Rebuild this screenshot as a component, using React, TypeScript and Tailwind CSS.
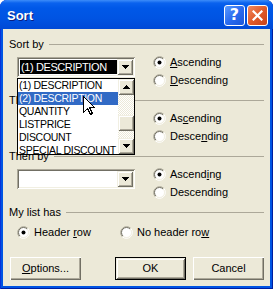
import React from "react";

const font = "font-['Liberation_Sans',Arial,sans-serif]";

function Radio({ checked }: { checked?: boolean }) {
  return (
    <svg width="13" height="13" viewBox="0 0 13 13" className="shrink-0">
      <circle cx="6.5" cy="6.5" r="5" fill="#fff" />
      <path d="M2.26 10.74 A6 6 0 0 1 10.74 2.26" stroke="#ACA899" strokeWidth="1" fill="none" />
      <path d="M10.74 2.26 A6 6 0 0 1 2.26 10.74" stroke="#fff" strokeWidth="1" fill="none" />
      <path d="M2.96 10.04 A5 5 0 0 1 10.04 2.96" stroke="#716F64" strokeWidth="1" fill="none" />
      <path d="M10.04 2.96 A5 5 0 0 1 2.96 10.04" stroke="#F1EFE2" strokeWidth="1" fill="none" />
      {checked && <circle cx="6.5" cy="6.5" r="2" fill="#000" />}
    </svg>
  );
}

function RadioRow({ checked, children }: { checked?: boolean; children: React.ReactNode }) {
  return (
    <div className="h-[18px] flex items-center gap-[4px]">
      <Radio checked={checked} />
      <span className="leading-[13px]">{children}</span>
    </div>
  );
}

function DownArrow() {
  return (
    <svg width="7" height="4" viewBox="0 0 7 4" shapeRendering="crispEdges">
      <rect x="0" y="0" width="7" height="1" fill="#000" />
      <rect x="1" y="1" width="5" height="1" fill="#000" />
      <rect x="2" y="2" width="3" height="1" fill="#000" />
      <rect x="3" y="3" width="1" height="1" fill="#000" />
    </svg>
  );
}

function UpArrow() {
  return (
    <svg width="7" height="4" viewBox="0 0 7 4" shapeRendering="crispEdges">
      <rect x="3" y="0" width="1" height="1" fill="#000" />
      <rect x="2" y="1" width="3" height="1" fill="#000" />
      <rect x="1" y="2" width="5" height="1" fill="#000" />
      <rect x="0" y="3" width="7" height="1" fill="#000" />
    </svg>
  );
}

const raised =
  "bg-[#ECE9D8] shadow-[inset_1px_1px_0_#F1EFE2,inset_-1px_-1px_0_#716F64,inset_2px_2px_0_#fff,inset_-2px_-2px_0_#ACA899]";

function Combo({ value }: { value?: string }) {
  return (
    <div className="w-[118px] h-[20px] bg-white p-[2px] flex shadow-[inset_1px_1px_0_#ACA899,inset_-1px_-1px_0_#fff,inset_2px_2px_0_#716F64,inset_-2px_-2px_0_#F1EFE2]">
      <div className="flex-1 flex items-center pl-[1px]">
        {value && (
          <span className="bg-black text-white h-[14px] leading-[14px] w-full pl-[1px] pr-[1px] tracking-[-0.4px] whitespace-nowrap overflow-hidden">
            {value}
          </span>
        )}
      </div>
      <div className={`w-[16px] h-[16px] flex items-center justify-center ${raised}`}>
        <DownArrow />
      </div>
    </div>
  );
}

function GroupHeader({ label }: { label: string }) {
  return (
    <div className="h-[14px] flex items-center pl-[6px] pr-[6px]">
      <span className="leading-[13px]">{label}</span>
      <div className="flex-1 h-px bg-[#ACA899] ml-[5px]" />
    </div>
  );
}

function SortGroup({
  label,
  value,
  asc,
  desc,
}: {
  label: string;
  value?: string;
  asc: React.ReactNode;
  desc: React.ReactNode;
}) {
  return (
    <div>
      <GroupHeader label={label} />
      <div className="h-[42px] flex">
        <div className="ml-[14px] mt-[6px]">
          <Combo value={value} />
        </div>
        <div className="ml-[18px] mt-[2px] flex flex-col">
          <RadioRow checked>{asc}</RadioRow>
          <RadioRow>{desc}</RadioRow>
        </div>
      </div>
    </div>
  );
}

function PushButton({ children, isDefault }: { children: React.ReactNode; isDefault?: boolean }) {
  if (isDefault) {
    return (
      <div className="w-[71px] h-[23px] border border-black flex">
        <div className={`flex-1 flex items-center justify-center ${raised}`}>{children}</div>
      </div>
    );
  }
  return (
    <div className="w-[71px] h-[23px] flex items-center justify-center bg-[#ECE9D8] shadow-[inset_1px_1px_0_#fff,inset_-1px_-1px_0_#716F64,inset_-2px_-2px_0_#ACA899]">
      {children}
    </div>
  );
}

const items = ["(1) DESCRIPTION", "(2) DESCRIPTION", "QUANTITY", "LISTPRICE", "DISCOUNT", "SPECIAL DISCOUNT"];

export default function App() {
  return (
    <div className={`${font} text-[11px] text-black bg-white w-[273px] h-[289px]`}>
      <div className="w-[273px] h-[289px] rounded-t-[7px] overflow-hidden bg-[#0054E3] flex flex-col px-[3px] pb-[3px] shadow-[inset_1px_0_0_#0831D9,inset_-1px_0_0_#001EA0,inset_0_-1px_0_#001EA0]">
        {/* Title bar */}
        <div className="-mx-[3px] h-[29px] shrink-0 flex items-center bg-[linear-gradient(to_bottom,#3D8DF9_0px,#0A62EE_3px,#0058E8_8px,#0054E3_18px,#0049D6_29px)]">
          <span className="ml-[7px] pt-[2px] text-white font-bold text-[13px] [text-shadow:1px_1px_0_#0A1E80]">
            Sort
          </span>
          <div className="ml-auto mr-[5px] flex gap-[2px] pt-[1px]">
            <div className="w-[21px] h-[21px] rounded-[3px] border border-white bg-[linear-gradient(135deg,#5A9BFF_0%,#2A6CF0_50%,#1A56D8_100%)] flex items-center justify-center">
              <span className="text-white font-bold text-[16px] leading-none font-['DejaVu_Sans',sans-serif]">?</span>
            </div>
            <div className="w-[21px] h-[21px] rounded-[3px] border border-white bg-[linear-gradient(135deg,#F08A60_0%,#E05A2A_50%,#C8411A_100%)] flex items-center justify-center">
              <svg width="11" height="11" viewBox="0 0 11 11">
                <path d="M1.5 1.5 L9.5 9.5 M9.5 1.5 L1.5 9.5" stroke="#fff" strokeWidth="2.2" strokeLinecap="square" />
              </svg>
            </div>
          </div>
        </div>

        {/* Body */}
        <div className="relative flex-1 bg-[#ECE9D8] pt-[8px]">
          <SortGroup
            label="Sort by"
            value="(1) DESCRIPTION"
            asc={<><u>A</u>scending</>}
            desc={<><u>D</u>escending</>}
          />
          <SortGroup
            label="Then by"
            asc={<>As<u>c</u>ending</>}
            desc={<>Desce<u>n</u>ding</>}
          />
          <SortGroup
            label="Then by"
            asc={<>Ascend<u>i</u>ng</>}
            desc={<>Descendin<u>g</u></>}
          />
          <GroupHeader label="My list has" />
          <div className="mt-[4px] flex">
            <div className="ml-[14px] w-[103px]">
              <RadioRow checked>Header <u>r</u>ow</RadioRow>
            </div>
            <RadioRow>No header ro<u>w</u></RadioRow>
          </div>
          <div className="mt-[16px] flex pl-[7px]">
            <PushButton>
              <span><u>O</u>ptions...</span>
            </PushButton>
            <div className="ml-[34px]">
              <PushButton isDefault>OK</PushButton>
            </div>
            <div className="ml-[7px]">
              <PushButton>Cancel</PushButton>
            </div>
          </div>

          {/* Dropdown list overlay */}
          <div className="absolute left-[14px] top-[49px] w-[118px] h-[77px] border border-black bg-white flex overflow-hidden">
            <div className="flex-1 flex flex-col overflow-hidden">
              {items.map((it, i) => (
                <div
                  key={it}
                  className={`h-[13px] shrink-0 leading-[13px] pl-[1px] whitespace-nowrap text-[10.5px] tracking-[-0.3px] ${
                    i === 1 ? "bg-[#316AC5] text-white" : ""
                  }`}
                >
                  {it}
                </div>
              ))}
            </div>
            <div className="w-[16px] flex flex-col">
              <div className={`h-[16px] shrink-0 flex items-center justify-center ${raised}`}>
                <UpArrow />
              </div>
              <div className="h-[20px] shrink-0 bg-[repeating-conic-gradient(#ECE9D8_0_25%,#fff_0_50%)] bg-[length:2px_2px]" />
              <div className={`h-[16px] shrink-0 ${raised}`} />
              <div className="flex-1 bg-[repeating-conic-gradient(#ECE9D8_0_25%,#fff_0_50%)] bg-[length:2px_2px]" />
              <div className={`h-[16px] shrink-0 flex items-center justify-center ${raised}`}>
                <DownArrow />
              </div>
            </div>
          </div>

          {/* Mouse cursor */}
          <svg className="absolute left-[80px] top-[67px]" width="13" height="20" viewBox="0 0 13 20">
            <path
              d="M0.5 0.5 L0.5 16.5 L4.5 12.5 L7.5 18.5 L9.5 17.5 L6.5 11.5 L11.5 11.5 Z"
              fill="#fff"
              stroke="#000"
              strokeWidth="1"
              shapeRendering="crispEdges"
            />
          </svg>
        </div>
      </div>
    </div>
  );
}
